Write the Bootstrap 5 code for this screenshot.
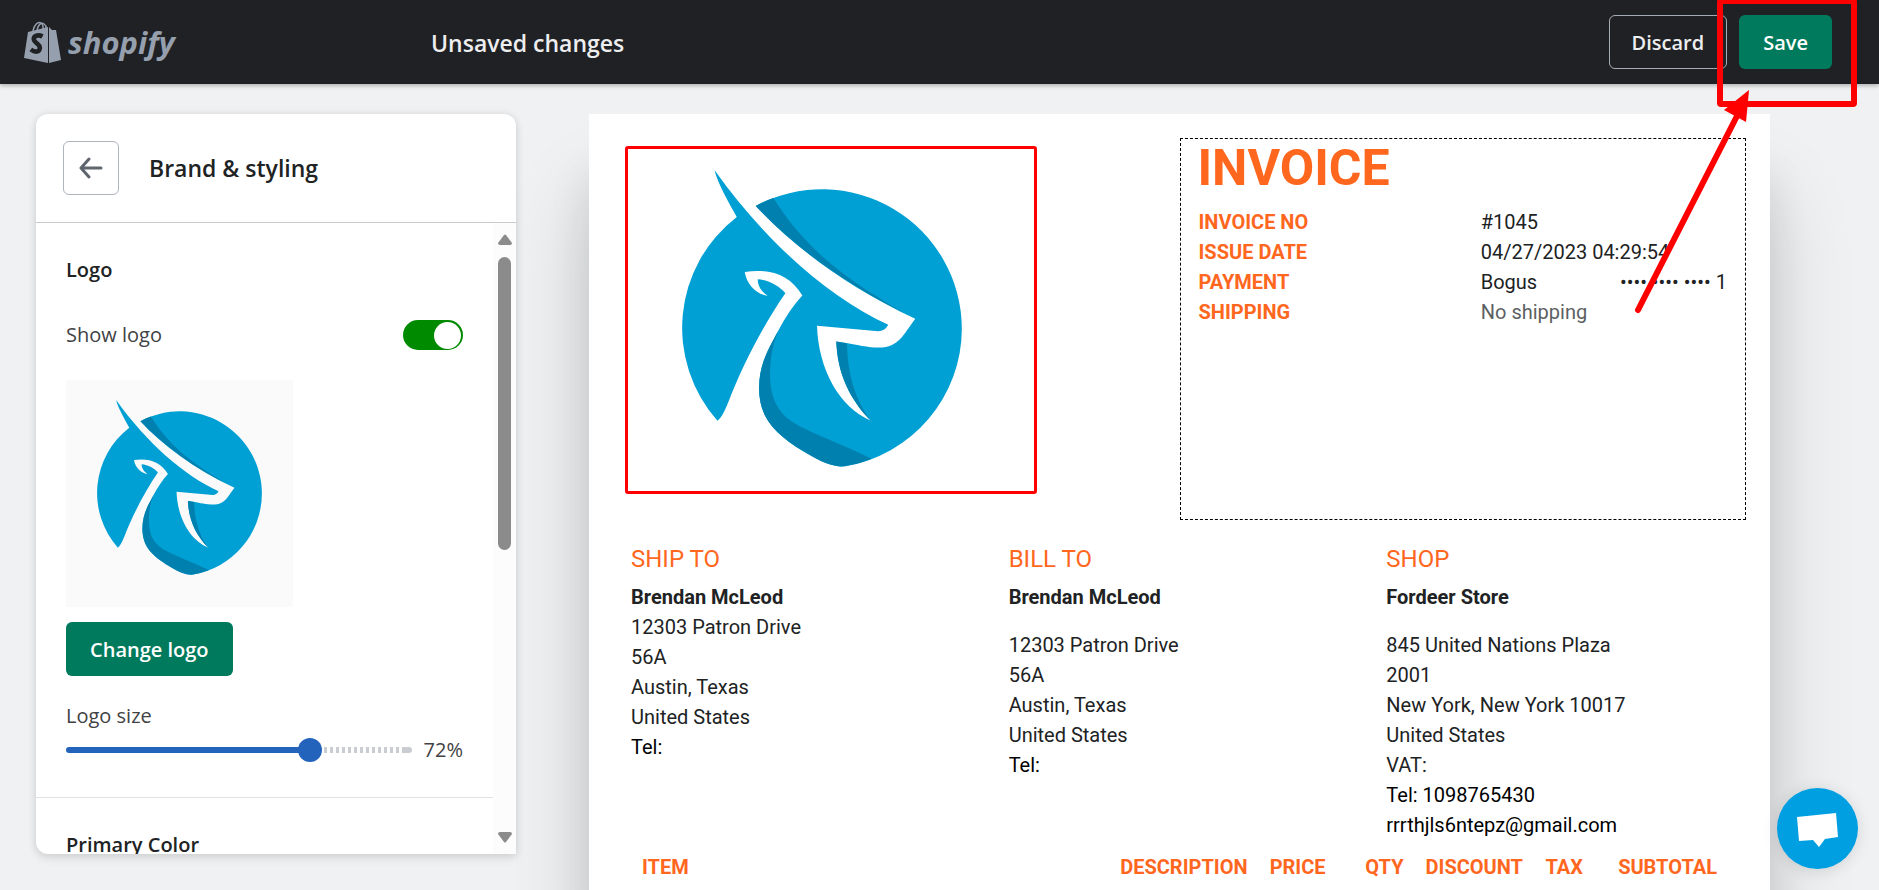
<!DOCTYPE html>
<html lang="en">
<head>
<meta charset="utf-8">
<meta name="viewport" content="width=device-width, initial-scale=1">
<title>Brand &amp; styling</title>
<link href="https://cdn.jsdelivr.net/npm/bootstrap@5.3.0/dist/css/bootstrap.min.css" rel="stylesheet">
<style>
  body { font-family: "Open Sans", "Noto Sans", sans-serif; font-size: 20px; line-height: 30px; color: #202223; background: #f0f1f3; }
  .topbar { height: 84px; padding: 0 47px 0 24px; background: #202124; box-shadow: 0 2px 4px rgba(0,0,0,.25); z-index: 2; }
  .brand-slot { width: 407px; gap: 7px; color: #959fad; text-decoration: none; }
  .wordmark { font-size: 31px; line-height: 40px; font-weight: 700; font-style: italic; }
  .page-state { font-size: 23px; line-height: 30px; font-weight: 600; color: #edeeef; padding-top: 2px; }
  .btn { font-size: 20px; line-height: 30px; font-weight: 600; height: 54px; border-radius: 6px; padding: 2px 22px 0; }
  .btn-dark-outline, .btn-dark-outline:hover { color: #edeeef; border: 1px solid #a6acb5; }
  .btn-green, .btn-green:hover { color: #fff; background: #007a5c; border: 0; padding: 2px 24px 0; }
  .workspace { min-height: 0; }
  .side-pane { flex: 0 0 516px; padding: 30px 0 36px 36px; z-index: 1; }
  .side-card { border-radius: 12px 12px 0 12px; background: #fff; box-shadow: 0 0 8px rgba(23,24,24,.08), 0 4px 10px rgba(23,24,24,.1); overflow: hidden; }
  .side-head { height: 109px; padding: 0 27px; gap: 30px; border-bottom: 1px solid #c9cccf; }
  .side-head h1 { font-size: 23px; line-height: 30px; font-weight: 600; }
  .btn-back { width: 56px; height: 54px; padding: 0; border: 1px solid #aeb4bb; }
  .side-scroll { min-height: 0; overflow: hidden; }
  .side-section { padding: 32px 30px; border-bottom: 1px solid #dfe1e3; }
  .side-section h2, .next-section h2 { font-size: 20px; line-height: 30px; font-weight: 600; margin: 0; }
  .side-section h2 { margin-bottom: 35px; }
  .next-section { padding: 32px 30px; }
  .side-label { color: #414244; }
  .toggle-row { margin-bottom: 30px; }
  .toggle { appearance: none; width: 60px; height: 30px; border-radius: 15px; background: #008a00; padding: 2px; display: flex; justify-content: flex-end; margin: 0; }
  .toggle::after { content: ""; width: 27px; height: 27px; border-radius: 50%; background: #fff; }
  .logo-thumb { width: 227px; height: 227px; background: #fafafa; padding: 20px 31px; margin-bottom: 15px; }
  .size-label { margin: 25px 0 4px; }
  .size-range { appearance: none; background: none; height: 24px; margin: 0; flex: 1 1 0; min-width: 0; }
  .size-range::-webkit-slider-runnable-track { height: 6px; border-radius: 3px; background: linear-gradient(#2463bc, #2463bc) 0 0 / 70% 100% no-repeat, linear-gradient(#c9ccd1, #c9ccd1) 100% 0 / 8px 100% no-repeat, repeating-linear-gradient(90deg, #c9ccd1 0 3px, #fff 3px 6px); }
  .size-range::-webkit-slider-thumb { appearance: none; width: 24px; height: 24px; margin-top: -9px; border-radius: 50%; background: #2463bc; }
  .scroll-rail { width: 23px; background: #fcfcfc; padding: 11px 0; }
  .scroll-grip { width: 13px; height: 293px; margin: 12px 0 auto; border-radius: 7px; background: #8b8b8b; }
  .preview-pane { padding: 0 109px 0 73px; margin-top: 30px; overflow: hidden; min-width: 0; }
  .sheet { height: 100%; background: #fff; padding: 24px 24px 0; font-family: Roboto, sans-serif; color: #202223; box-shadow: 0 80px 80px rgba(0,0,0,.16), 0 60px 40px rgba(0,0,0,.09); }
  .sheet .row { --bs-gutter-x: 0; }
  .cell { padding: 0 18px; }
  .tint { color: #ff671e; }
  .logo-frame { margin: 8px 0 0 12px; width: 412px; height: 348px; border: 3px solid #f00; border-radius: 3px; padding: 21px 0 0 54px; }
  .invoice-box { height: 382px; border: 1px dashed #000; }
  .invoice-box h2 { font-size: 50px; line-height: 58px; font-weight: 700; padding: 0 17px; margin-bottom: 10px; }
  .muted-value { color: #5c5f62; }
  .addresses { padding-top: 24px; }
  .addresses h3 { font-size: 24px; line-height: 30px; font-weight: 400; margin-bottom: 8px; }
  .spaced-name { margin-bottom: 18px; }
  .contact-line { color: #000; }
  .items-wrap { padding: 0 18px; }
  .items { width: 100%; }
  .items th { padding: 12px 11px; font-weight: 700; text-align: right; }
  .w-desc { width: 148px; } .w-price, .w-qty { width: 78px; } .w-discount { width: 119px; } .w-tax { width: 60px; } .w-sub { width: 134px; }
  .chat { position: fixed; right: 21px; bottom: 21px; width: 81px; height: 81px; border: 0; border-radius: 50%; background: #009fe2; box-shadow: 0 2px 16px rgba(0,0,0,.12); z-index: 3; padding: 0; }
  .callout-layer { z-index: 4; pointer-events: none; }
</style>
</head>
<body>
<svg class="d-none" aria-hidden="true">
  <symbol id="antelope" viewBox="246 150 840 892">
    <path fill="#00a0d4" d="M343 150C352 190 390 255 410 291A420 420 0 0 0 352 903C375 885 385 840 410 785C445 705 500 600 556 520C540 500 505 480 473 478C473 500 485 515 503 528C470 523 440 495 434 456C510 445 570 465 607 527C580 555 555 595 535 632C510 680 477 730 477 805C477 900 530 945 610 995C670 1032 705 1043 735 1040A420 420 0 0 0 1086 626A420 420 0 0 0 467 258C580 380 740 500 946 597L915 640C890 675 865 685 825 683C790 681 760 672 709 665C712 760 750 840 812 902C720 865 655 750 651 618L835 634Q855 634 865 615C690 535 500 370 343 150Z"/>
    <path fill="#0080ae" d="M467 258Q495 242 520 234C600 360 700 460 915 580C740 495 580 380 467 258ZM709 665L741 670C742 760 765 840 812 902C750 840 712 760 709 665ZM535 632C510 680 477 730 477 805C477 900 530 945 610 995C670 1032 705 1043 735 1040Q775 1034 815 1017C740 980 670 955 610 925C545 895 510 850 510 765C510 710 520 670 535 632Z"/>
  </symbol>
</svg>

<div class="vh-100 d-flex flex-column overflow-hidden position-relative">
  <header class="topbar d-flex align-items-center flex-shrink-0 position-relative">
    <a class="brand-slot d-flex align-items-center flex-shrink-0" href="#">
      <svg width="37" height="42" viewBox="0 0 37 42" aria-hidden="true">
        <g fill="none" stroke="#959fad" stroke-width="1.5"><path d="M9 10C10 4 14 0 17 2S19 6 19 8"/><path d="M13 9C14 4 17 1 20 3S22 6 22 8"/></g>
        <path fill="#959fad" d="M4 11L24 6V42L0 37Z"/>
        <path fill="#959fad" d="M25 6L28 9L32 9L37 39L25 42Z"/>
        <path fill="none" stroke="#202124" stroke-width="4.600" d="M18.500 15.500C14 13 9.500 15 9.800 18.500S16 22.500 15.800 27S11 31.500 6.800 28.500"/>
      </svg>
      <span class="wordmark">shopify</span>
    </a>
    <span class="page-state flex-grow-1">Unsaved changes</span>
    <div class="d-flex gap-2">
      <button type="button" class="btn btn-dark-outline me-1">Discard</button>
      <button type="button" class="btn btn-green">Save</button>
    </div>
  </header>

  <main class="workspace d-flex flex-grow-1">
    <aside class="side-pane d-flex flex-column">
      <div class="side-card d-flex flex-column flex-grow-1">
        <div class="side-head d-flex align-items-center flex-shrink-0">
          <button type="button" class="btn btn-back d-flex align-items-center justify-content-center" aria-label="Back">
            <svg width="24" height="22" viewBox="0 0 24 22" fill="none" stroke="#5f6670" stroke-width="3" stroke-linecap="round" stroke-linejoin="round"><path d="M22 11H2M10 2L2 11L10 20"/></svg>
          </button>
          <h1 class="m-0">Brand &amp; styling</h1>
        </div>
        <div class="side-scroll d-flex flex-grow-1">
          <div class="flex-grow-1">
            <section class="side-section">
              <h2>Logo</h2>
              <div class="toggle-row d-flex justify-content-between align-items-center">
                <label class="side-label" for="showLogo">Show logo</label>
                <input class="toggle" type="checkbox" role="switch" id="showLogo" checked>
              </div>
              <div class="logo-thumb"><svg class="d-block" width="165" height="175" role="img" aria-label="Store logo"><use href="#antelope"/></svg></div>
              <button type="button" class="btn btn-green">Change logo</button>
              <div class="size-label"><label class="side-label" for="logoSize">Logo size</label></div>
              <div class="d-flex align-items-center gap-2">
                <input class="size-range" type="range" id="logoSize" min="0" max="100" value="72">
                <output class="side-label ps-1" for="logoSize">72%</output>
              </div>
            </section>
            <section class="next-section"><h2>Primary Color</h2></section>
          </div>
          <div class="scroll-rail d-flex flex-column align-items-center flex-shrink-0" aria-hidden="true">
            <svg width="14" height="11" viewBox="0 0 14 11"><path fill="#8b8b8b" d="M6 1Q7 0 8 1L14 9Q14 11 12 11H2Q0 11 0 9Z"/></svg>
            <div class="scroll-grip"></div>
            <svg width="14" height="11" viewBox="0 0 14 11"><path fill="#8b8b8b" d="M6 10Q7 11 8 10L14 2Q14 0 12 0H2Q0 0 0 2Z"/></svg>
          </div>
        </div>
      </div>
    </aside>

    <section class="preview-pane flex-grow-1">
      <article class="sheet">
        <div class="row">
          <div class="col-6">
            <div class="logo-frame"><svg class="d-block" width="280" height="297" role="img" aria-label="Store logo"><use href="#antelope"/></svg></div>
          </div>
          <div class="col-6 invoice-box">
            <h2 class="tint">INVOICE</h2>
            <div class="row"><div class="col-6 cell tint"><strong>INVOICE NO</strong></div><div class="col-6 cell">#1045</div></div>
            <div class="row"><div class="col-6 cell tint"><strong>ISSUE DATE</strong></div><div class="col-6 cell text-nowrap">04/27/2023 04:29:54</div></div>
            <div class="row"><div class="col-6 cell tint"><strong>PAYMENT</strong></div><div class="col-6 cell d-flex justify-content-between"><span>Bogus</span><span>•••• •••• •••• 1</span></div></div>
            <div class="row"><div class="col-6 cell tint"><strong>SHIPPING</strong></div><div class="col-6 cell muted-value">No shipping</div></div>
          </div>
        </div>
        <div class="row addresses">
          <div class="col-4 cell">
            <h3 class="tint">SHIP TO</h3>
            <div class="fw-bold">Brendan McLeod</div>
            <div>12303 Patron Drive</div><div>56A</div><div>Austin, Texas</div><div>United States</div>
            <div class="contact-line">Tel:</div>
          </div>
          <div class="col-4 cell">
            <h3 class="tint">BILL TO</h3>
            <div class="fw-bold spaced-name">Brendan McLeod</div>
            <div>12303 Patron Drive</div><div>56A</div><div>Austin, Texas</div><div>United States</div>
            <div class="contact-line">Tel:</div>
          </div>
          <div class="col-4 cell">
            <h3 class="tint">SHOP</h3>
            <div class="fw-bold spaced-name">Fordeer Store</div>
            <div>845 United Nations Plaza</div><div>2001</div><div>New York, New York 10017</div><div>United States</div><div>VAT:</div>
            <div class="contact-line">Tel: 1098765430</div>
            <div class="contact-line">rrrthjls6ntepz@gmail.com</div>
          </div>
        </div>
        <div class="items-wrap">
          <table class="items">
            <colgroup><col><col class="w-desc"><col class="w-price"><col class="w-qty"><col class="w-discount"><col class="w-tax"><col class="w-sub"></colgroup>
            <thead><tr class="tint"><th class="text-start">ITEM</th><th>DESCRIPTION</th><th>PRICE</th><th>QTY</th><th>DISCOUNT</th><th>TAX</th><th>SUBTOTAL</th></tr></thead>
          </table>
        </div>
      </article>
    </section>
  </main>

  <svg class="callout-layer position-absolute top-0 end-0" width="300" height="330" viewBox="0 0 300 330" aria-hidden="true">
    <rect x="141" y="1" width="134" height="103" rx="1" fill="none" stroke="#f00" stroke-width="6"/>
    <path d="M59 310L158 116" stroke="#f00" stroke-width="6" stroke-linecap="round"/>
    <path d="M170 90L145 110L167 122Z" fill="#f00"/>
  </svg>
  <button type="button" class="chat" aria-label="Open chat">
    <svg class="d-block" width="81" height="81" viewBox="0 0 81 81"><path fill="#fff" d="M20 29L59 25L61 49L48 51L42 59L36 52L22 53Z"/></svg>
  </button>
</div>
<script src="https://cdn.jsdelivr.net/npm/bootstrap@5.3.0/dist/js/bootstrap.bundle.min.js"></script>
</body>
</html>
